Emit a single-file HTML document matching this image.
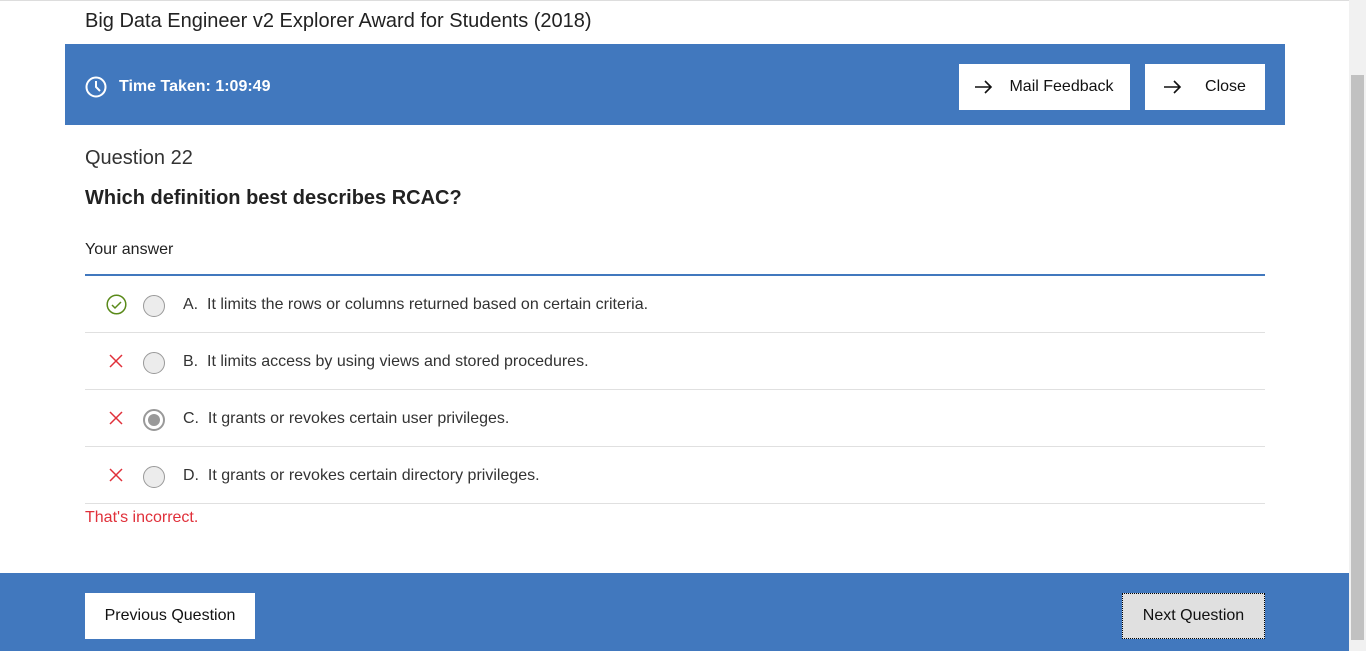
<!DOCTYPE html>
<html><head><style>
body{margin:0;width:1366px;height:651px;overflow:hidden;background:#fff;font-family:"Liberation Sans",Arial,sans-serif;color:#222;position:relative}
.a{position:absolute}
.blue{background:#4178be}
.btn{position:absolute;background:#fff;color:#111;font-size:16px;display:flex;align-items:center;justify-content:center}
.row{position:absolute;left:85px;width:1180px;height:56px;border-bottom:1px solid #e0e0e0}
.row .t{position:absolute;left:98px;top:20px;font-size:16px;color:#333}
.rad{position:absolute;left:58px;top:19px;width:22px;height:22px;border:1px solid #999;border-radius:50%;background:#ececec;box-sizing:border-box}
.x{position:absolute;left:24px;top:21px}
</style></head><body>
<div class="a" style="left:0;top:0;width:1349px;height:1px;background:#ddd"></div>
<div class="a" style="left:85px;top:10px;font-size:20px;color:#222">Big Data Engineer v2 Explorer Award for Students (2018)</div>
<div class="a blue" style="left:65px;top:44px;width:1220px;height:81px"></div>
<svg class="a" style="left:85px;top:76px" width="22" height="22" viewBox="0 0 22 22"><circle cx="11" cy="11" r="9.5" fill="none" stroke="#fff" stroke-width="2"/><path d="M11 5v6l4 4" fill="none" stroke="#fff" stroke-width="2"/></svg>
<div class="a" style="left:119px;top:78px;font-size:16px;font-weight:bold;color:#fff">Time Taken: 1:09:49</div>
<div class="btn" style="left:959px;top:64px;width:171px;height:46px"><svg width="18" height="14" viewBox="0 0 18 14" style="margin-right:16px"><path d="M0 7h16M10 1l6 6-6 6" fill="none" stroke="#111" stroke-width="1.6"/></svg>Mail Feedback</div>
<div class="btn" style="left:1145px;top:64px;width:120px;height:46px"><svg width="18" height="14" viewBox="0 0 18 14" style="margin-right:23px"><path d="M0 7h16M10 1l6 6-6 6" fill="none" stroke="#111" stroke-width="1.6"/></svg>Close</div>
<div class="a" style="left:85px;top:147px;font-size:20px;color:#333">Question 22</div>
<div class="a" style="left:85px;top:187px;font-size:20px;font-weight:bold;color:#222">Which definition best describes RCAC?</div>
<div class="a" style="left:85px;top:241px;font-size:16px;color:#222">Your answer</div>
<div class="a" style="left:85px;top:274px;width:1180px;height:2px;background:#4178be"></div>
<div class="row" style="top:276px"><svg class="a" style="left:21px;top:18px" width="21" height="21" viewBox="0 0 21 21"><circle cx="10.5" cy="10.5" r="9.3" fill="none" stroke="#5a8a1a" stroke-width="1.5"/><path d="M6 11l3 3 6-6" fill="none" stroke="#5a8a1a" stroke-width="1.5"/></svg><div class="rad"></div><div class="t">A.&nbsp; It limits the rows or columns returned based on certain criteria.</div></div>
<div class="row" style="top:333px"><svg class="x" width="14" height="14" viewBox="0 0 14 14"><path d="M1 1l12 12M13 1L1 13" stroke="#e0303a" stroke-width="1.5"/></svg><div class="rad"></div><div class="t">B.&nbsp; It limits access by using views and stored procedures.</div></div>
<div class="row" style="top:390px"><svg class="x" width="14" height="14" viewBox="0 0 14 14"><path d="M1 1l12 12M13 1L1 13" stroke="#e0303a" stroke-width="1.5"/></svg><div class="rad" style="border:2px solid #999;background:#fff"><div style="position:absolute;left:3px;top:3px;width:12px;height:12px;border-radius:50%;background:#999"></div></div><div class="t">C.&nbsp; It grants or revokes certain user privileges.</div></div>
<div class="row" style="top:447px"><svg class="x" width="14" height="14" viewBox="0 0 14 14"><path d="M1 1l12 12M13 1L1 13" stroke="#e0303a" stroke-width="1.5"/></svg><div class="rad"></div><div class="t">D.&nbsp; It grants or revokes certain directory privileges.</div></div>
<div class="a" style="left:85px;top:509px;font-size:16px;color:#e0303a">That's incorrect.</div>
<div class="a blue" style="left:0;top:573px;width:1349px;height:78px"></div>
<div class="btn" style="left:85px;top:593px;width:170px;height:46px">Previous Question</div>
<div class="btn" style="left:1122px;top:593px;width:143px;height:46px;background:#e0e0e0;border:1px dotted #000;box-sizing:border-box">Next Question</div>
<div class="a" style="left:1349px;top:0;width:17px;height:651px;background:#f1f1f1"></div>
<div class="a" style="left:1351px;top:75px;width:13px;height:565px;background:#c1c1c1"></div>
</body></html>
